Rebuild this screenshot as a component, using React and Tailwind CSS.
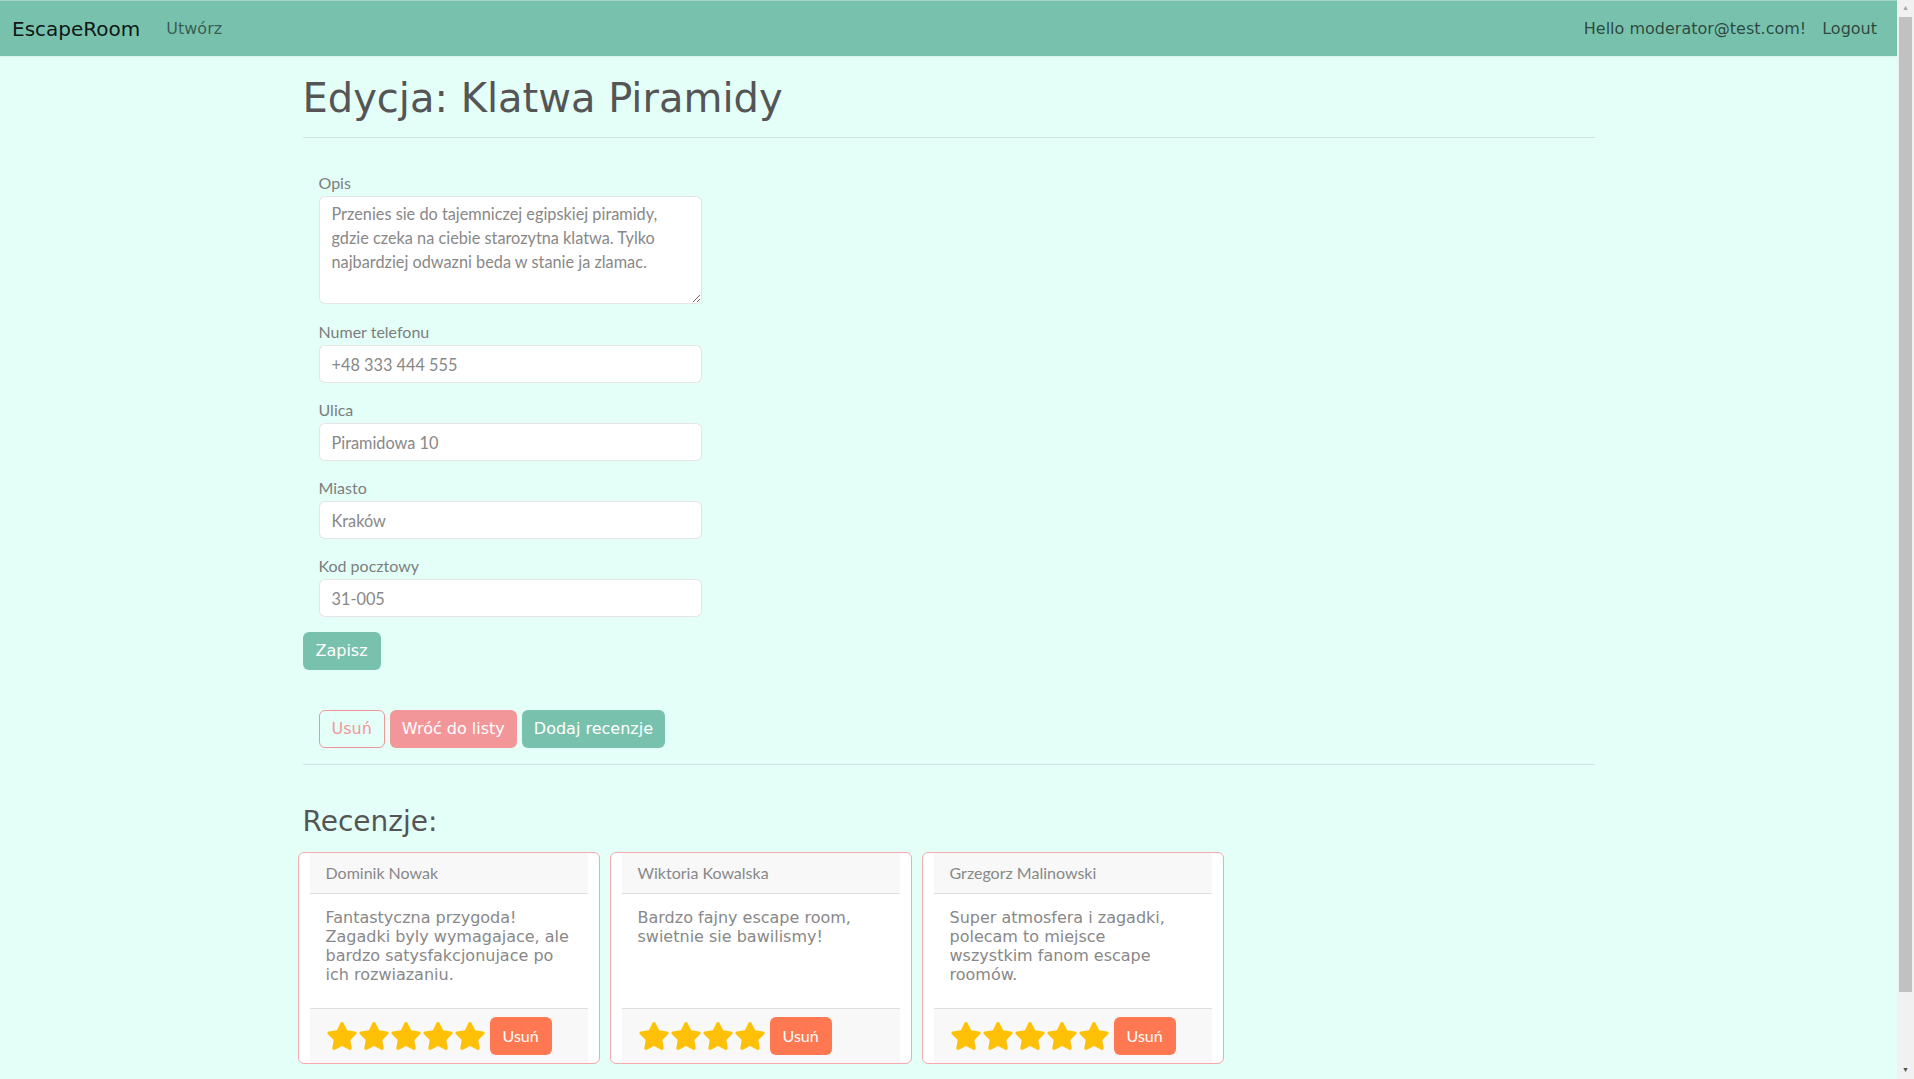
import React from 'react';
import { FaStar } from 'react-icons/fa';

const reviews = [
  {
    author: 'Dominik Nowak',
    lines: ['Fantastyczna przygoda!', 'Zagadki byly wymagajace, ale', 'bardzo satysfakcjonujace po', 'ich rozwiazaniu.'],
    rating: 5,
  },
  {
    author: 'Wiktoria Kowalska',
    lines: ['Bardzo fajny escape room,', 'swietnie sie bawilismy!'],
    rating: 4,
  },
  {
    author: 'Grzegorz Malinowski',
    lines: ['Super atmosfera i zagadki,', 'polecam to miejsce', 'wszystkim fanom escape', 'roomów.'],
    rating: 5,
  },
];

const fields = [
  { label: 'Numer telefonu', value: '+48 333 444 555' },
  { label: 'Ulica', value: 'Piramidowa 10' },
  { label: 'Miasto', value: 'Kraków' },
  { label: 'Kod pocztowy', value: '31-005' },
];

const ReviewCard = ({ review }) => (
  <div className="w-[302px] h-[212px] flex flex-col px-[11px] bg-white border border-[#f4a9ac] rounded-[6px]">
    <div className="h-[41px] px-4 flex items-center bg-[#f8f8f8] border-b border-[#dedede] font-['Lato',sans-serif] text-[16px] text-[#888]">
      {review.author}
    </div>
    <div className="flex-1 px-4 pt-[14px] font-['DejaVu_Sans',sans-serif] text-[16px] leading-[19px] text-[#888]">
      {review.lines.map((line) => (
        <div key={line} className="whitespace-nowrap">{line}</div>
      ))}
    </div>
    <div className="h-[55px] px-4 flex items-center bg-[#f8f8f8] border-t border-[#dedede]">
      <div className="flex">
        {Array.from({ length: review.rating }).map((_, i) => (
          <FaStar key={i} className="w-[32px] h-[28px] text-[#ffc107]" />
        ))}
      </div>
      <button className="ml-[4px] h-[38px] px-[13px] rounded-[6px] bg-[#ff7851] text-white font-['Lato',sans-serif] text-[16px]">
        Usuń
      </button>
    </div>
  </div>
);

// window scrollbar as seen in the screenshot
const Scrollbar = () => (
  <div className="w-[17px] h-screen flex flex-col bg-[#f1f1f1] shrink-0">
    <div className="h-[17px] flex items-center justify-center text-[7px] text-[#a3a3a3]">▲</div>
    <div className="h-[975px] mx-[2px] bg-[#c1c1c1]" />
    <div className="flex-1" />
    <div className="h-[17px] flex items-center justify-center text-[7px] text-[#505050]">▼</div>
  </div>
);

export default function App() {
  return (
    <div className="flex h-screen overflow-hidden bg-[#e4fff8]">
      <div className="flex-1 h-screen overflow-y-auto [scrollbar-width:none]">
        <div className="pb-[110px]">
          {/* Navbar */}
          <nav className="h-[56px] bg-[#78c2ad] border-t border-[#a3d6c7] flex items-center justify-between px-3 font-['DejaVu_Sans',sans-serif] shadow-[0_1px_2px_rgba(0,0,0,0.06)]">
            <div className="flex items-center">
              <span className="text-[20px] text-black/90 mr-[18px]">EscapeRoom</span>
              <a className="px-2 text-[16px] text-black/55">Utwórz</a>
            </div>
            <div className="flex items-center text-[16px] text-black/65">
              <span className="pr-2">Hello moderator@test.com!</span>
              <a className="px-2">Logout</a>
            </div>
          </nav>

          <div className="mx-auto w-[1292px]">
            <h1 className="mt-[18px] text-[40px] leading-[48px] text-[#555] font-['DejaVu_Sans',sans-serif]">
              Edycja: Klatwa Piramidy
            </h1>
            <hr className="mt-[15px] border-t border-black/10" />

            {/* Form */}
            <form className="mt-[33px]">
              <div className="pl-4 w-[400px] font-['Lato',sans-serif] text-[16px]">
                <label className="block leading-[24px] mb-[1px] text-[#7d7d7d]">Opis</label>
                <textarea
                  className="block w-[383px] h-[108px] px-3 py-[5px] leading-[24px] text-[16.3px] text-[#888] bg-white border border-black/10 rounded-[6px] outline-none"
                  defaultValue={'Przenies sie do tajemniczej egipskiej piramidy,\ngdzie czeka na ciebie starozytna klatwa. Tylko\nnajbardziej odwazni beda w stanie ja zlamac.'}
                />
                <div className="h-[16px]" />
                {fields.map((f) => (
                  <div key={f.label} className="mb-[15px]">
                    <label className="block leading-[24px] mb-[1px] text-[#7d7d7d]">{f.label}</label>
                    <input
                      className="block w-[383px] h-[38px] px-3 text-[16.3px] text-[#888] bg-white border border-black/10 rounded-[6px] outline-none"
                      defaultValue={f.value}
                    />
                  </div>
                ))}
              </div>
              <button
                type="button"
                className="h-[38px] px-[13px] rounded-[6px] bg-[#78c2ad] text-white text-[16px] font-['DejaVu_Sans',sans-serif]"
              >
                Zapisz
              </button>
            </form>

            {/* Actions */}
            <div className="mt-[40px] pl-4 flex gap-[5px] font-['DejaVu_Sans',sans-serif] text-[16px]">
              <button className="h-[38px] px-3 rounded-[6px] border border-[#f3969a] text-[#f3969a]">Usuń</button>
              <button className="h-[38px] px-3 rounded-[6px] bg-[#f3969a] text-white">Wróć do listy</button>
              <button className="h-[38px] px-3 rounded-[6px] bg-[#78c2ad] text-white">Dodaj recenzje</button>
            </div>
            <hr className="mt-[16px] border-t border-black/10" />

            {/* Reviews */}
            <h3 className="mt-[40px] text-[28px] leading-[34px] text-[#555] font-['DejaVu_Sans',sans-serif]">
              Recenzje:
            </h3>
            <div className="mt-[13px] -ml-[5px] flex gap-[10px]">
              {reviews.map((r) => (
                <ReviewCard key={r.author} review={r} />
              ))}
            </div>
          </div>
        </div>
      </div>
      <Scrollbar />
    </div>
  );
}
